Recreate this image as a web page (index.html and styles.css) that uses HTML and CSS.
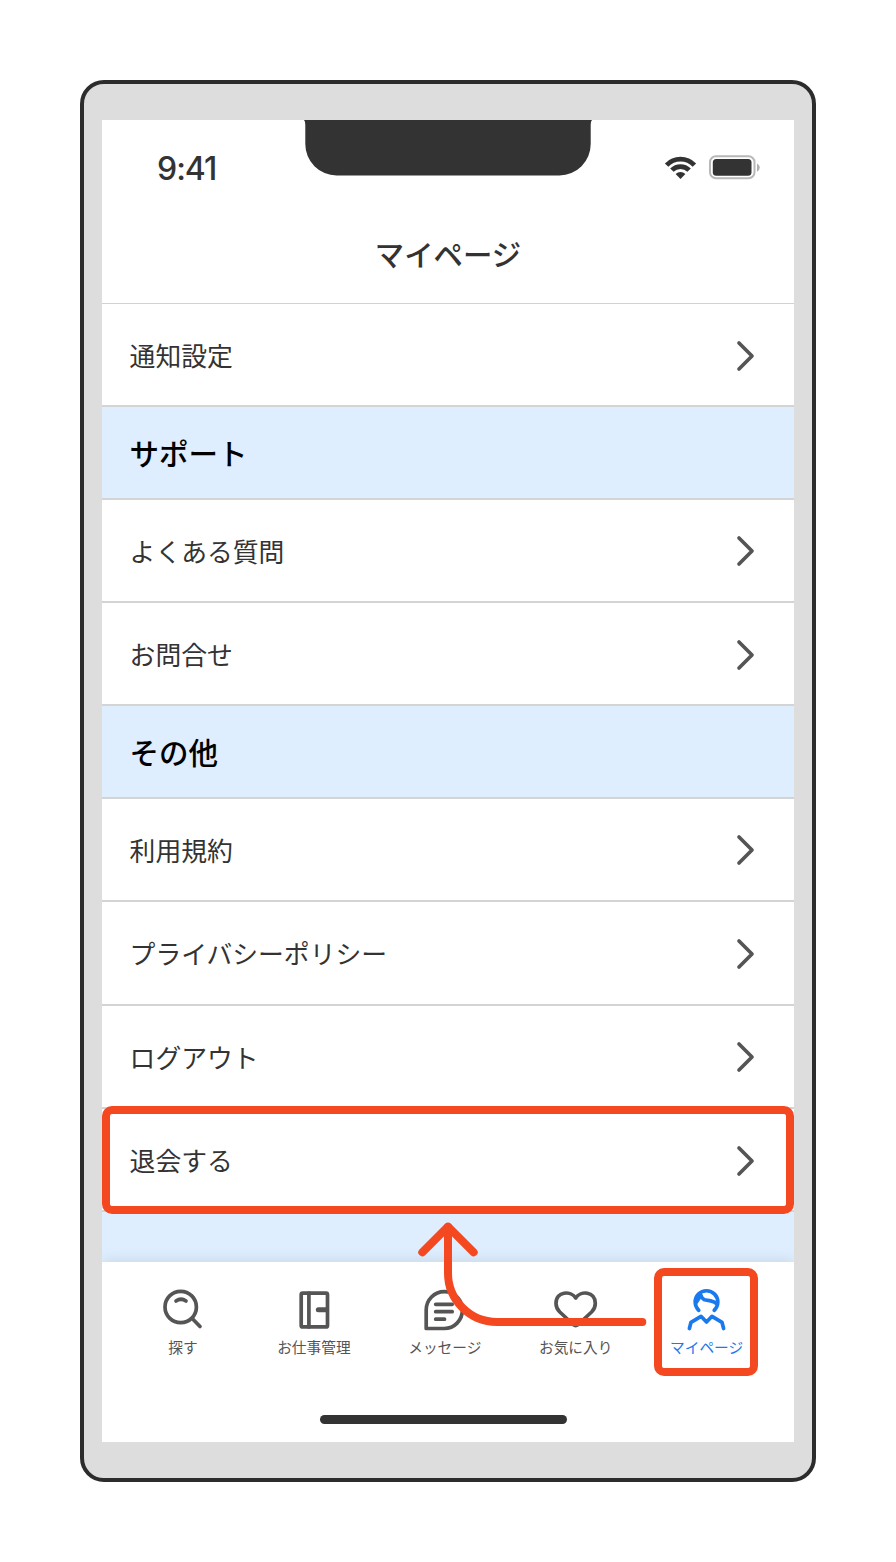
FILE: index.html
```html
<!DOCTYPE html>
<html lang="ja">
<head>
  <meta charset="UTF-8">
  <meta name="viewport" content="width=device-width, initial-scale=1.0">
  <title>マイページ</title>
  <link rel="stylesheet" href="styles.css">
</head>
<body>
  <svg class="defs">
    <symbol id="chevron" viewBox="0 0 20 32">
      <path d="M4 3 L17 16 L4 29" />
    </symbol>
  </svg>

  <div class="phone">
    <div class="screen">
      <div class="status-bar">
        <span class="time">9:41</span>
        <svg class="notch" width="290" height="56" viewBox="0 0 290 56">
          <path d="M1 0 H289 Q287.700 1 287.700 5 V24 A31.300 31.300 0 0 1 256.400 55.400 H33.600 A31.300 31.300 0 0 1 2.300 24 V5 Q2.300 1 1 0 Z" />
        </svg>
        <svg class="status-icons" width="98" height="28" viewBox="0 0 98 28">
          <!-- Wi-Fi -->
          <path class="wave" d="M4.600 12.100 A19.300 19.300 0 0 1 32.400 12.100" />
          <path class="wave" d="M9.900 17.200 A12 12 0 0 1 27.100 17.200" />
          <path class="wave-dot" d="M18.500 26 L13.600 21 A7 7 0 0 1 23.400 21 Z" />
          <!-- Battery -->
          <rect class="battery" x="48" y="3.300" width="44.500" height="22" rx="6" />
          <rect class="battery-level" x="50.800" y="5.900" width="38.700" height="16.800" rx="3.500" />
          <path class="battery-cap" d="M95 10.500 Q97.800 12 97.800 14.500 T95 18.800 Z" />
        </svg>
      </div>

      <h1 class="title">マイページ</h1>

      <ul class="menu">
        <li class="row">通知設定<svg class="chevron"><use href="#chevron" /></svg></li>
        <li class="section">サポート</li>
        <li class="row">よくある質問<svg class="chevron"><use href="#chevron" /></svg></li>
        <li class="row">お問合せ<svg class="chevron"><use href="#chevron" /></svg></li>
        <li class="section">その他</li>
        <li class="row">利用規約<svg class="chevron"><use href="#chevron" /></svg></li>
        <li class="row">プライバシーポリシー<svg class="chevron"><use href="#chevron" /></svg></li>
        <li class="row">ログアウト<svg class="chevron"><use href="#chevron" /></svg></li>
        <li class="row">退会する<svg class="chevron"><use href="#chevron" /></svg></li>
      </ul>

      <nav class="tabs">
        <div class="tab">
          <svg class="icon" viewBox="0 0 44 44">
            <circle cx="19.700" cy="19" r="15.700" />
            <path d="M31.200 30.500 L39 38.500" />
            <path d="M15 13 Q20 9.500 25 13" />
          </svg>
          <span>探す</span>
        </div>
        <div class="tab">
          <svg class="icon" viewBox="0 0 44 44">
            <rect x="9.200" y="5.200" width="26.300" height="33.700" rx="1.500" />
            <path d="M16.900 5 V39" />
            <path class="handle" d="M26.300 21.800 H34" />
          </svg>
          <span>お仕事管理</span>
        </div>
        <div class="tab">
          <svg class="icon" viewBox="0 0 44 44">
            <path d="M3.200 40.500 V22 A18.100 18.400 0 0 1 39.400 22 A18.100 18.500 0 0 1 21.300 40.500 Z" />
            <path d="M12.700 16.300 H29.200 M12.700 23.700 H29.200 M12.700 31.200 H21.500" />
          </svg>
          <span>メッセージ</span>
        </div>
        <div class="tab">
          <svg class="icon" viewBox="0 0 44 44">
            <path d="M21.700 10 C16.800 2.500 2 3 2 15.500 C2 19 3.300 21.500 5.800 24 L19.300 36.500 Q21.700 38.500 24.100 36.500 L37.600 24 C40.100 21.500 41.300 19 41.300 15.500 C41.300 3 26.600 2.500 21.700 10 Z" />
          </svg>
          <span>お気に入り</span>
        </div>
        <div class="tab active">
          <svg class="icon" viewBox="0 0 44 44">
            <path d="M13.800 22.300 A11.300 11.300 0 1 1 29.200 22.300" />
            <path class="hair" d="M15.500 6.500 Q17 10.700 19.500 11.700 L25.700 12.900 Q30 13.700 32 16.200" />
            <path class="hair" d="M15.500 8 L11.500 14" />
            <path d="M4.400 40.500 L6 34.300 L16 28.300 L21.500 34 L27 28.300 L37 34.300 L38.600 40.500" />
          </svg>
          <span>マイページ</span>
        </div>
      </nav>
      <div class="home-bar"></div>

      <!-- Guide: tap the tab, then the menu row -->
      <div class="callout callout-row"></div>
      <div class="callout callout-tab"></div>
      <svg class="arrow" width="240" height="120" viewBox="0 0 240 120">
        <path d="M8.300 36.300 L34 10.700 L59.700 36.300" />
        <path d="M34 11 V57 A49 49 0 0 0 83 106 H228.300" />
      </svg>
    </div>
  </div>
</body>
</html>
```

FILE: styles.css
```css
* {
  box-sizing: border-box;
}

body {
  margin: 0;
  padding: 80px;
  background: #ffffff;
  color: #333333;
  font-family: "Noto Sans CJK JP", sans-serif;
}

svg {
  fill: none;
  stroke-linecap: round;
  stroke-linejoin: round;
}

.defs {
  position: absolute;
  width: 0;
  height: 0;
}

/* Device */
.phone {
  width: 736px;
  height: 1402px;
  padding: 36px 18px;
  background: #dddddd;
  border: 4px solid #2c2c2c;
  border-radius: 24px;
}

.screen {
  position: relative;
  display: flex;
  flex-direction: column;
  height: 1322px;
  background: #ffffff;
}

/* Status bar */
.status-bar {
  display: grid;
  grid-template-columns: 1fr 290px 1fr;
  height: 88px;
}

.time {
  padding: 29px 0 0 55px;
  font-family: Inter, sans-serif;
  font-size: 32px;
  font-weight: 500;
  line-height: 39px;
  letter-spacing: -1px;
}

.notch {
  fill: #333333;
}

.status-icons {
  justify-self: end;
  margin: 33px 34px 0 0;
}

.wave {
  stroke: #333333;
  stroke-width: 4.8;
  stroke-linecap: butt;
}

.wave-dot,
.battery-level {
  fill: #333333;
}

.battery {
  stroke: #b8b8b8;
  stroke-width: 2;
}

.battery-cap {
  fill: #b0b0b0;
}

.title {
  height: 96px;
  margin: 0;
  border-bottom: 1px solid #d2d2d2;
  font-size: 29.4px;
  font-weight: 500;
  line-height: 90px;
  text-align: center;
}

/* Menu */
.menu {
  flex: 1;
  margin: 0;
  padding: 0;
  background: #deeeff;
  list-style: none;
}

.row,
.section {
  display: flex;
  align-items: center;
  padding: 0 39px 0 27.6px;
  border-bottom: 2px solid #d4d4d4;
}

.row {
  justify-content: space-between;
  height: 103.4px;
  background: #ffffff;
  font-size: 25.8px;
}

.section {
  height: 92.3px;
  padding-bottom: 2px;
  color: #000000;
  font-size: 29.5px;
  font-weight: 500;
}

.chevron {
  width: 20px;
  height: 32px;
  margin-top: 2px;
  stroke: #555555;
  stroke-width: 3.7;
}

/* Tab bar */
.tabs {
  display: flex;
  height: 153px;
  padding: 26px 22px 0 15.5px;
  background: #ffffff;
  box-shadow: 0 -1px 14px rgba(0, 0, 0, 0.1);
  clip-path: inset(-20px 0 0 0);
}

.tab {
  display: flex;
  flex: 1;
  flex-direction: column;
  align-items: center;
  color: #555555;
  font-size: 14.7px;
  line-height: 22px;
  white-space: nowrap;
}

.tab.active {
  color: #1a7aed;
}

.icon {
  width: 44px;
  height: 44px;
  margin-bottom: 4px;
  stroke: currentColor;
  stroke-width: 3.7;
}

.handle {
  stroke-width: 5;
}

.hair {
  stroke-width: 3.7;
}

.home-bar {
  align-self: center;
  width: 247px;
  height: 9px;
  margin: 0 9px 18px 0;
  background: #333333;
  border-radius: 5px;
}

/* Guide overlay */
.callout {
  position: absolute;
  border: 8px solid #f44820;
  border-radius: 10px;
}

.callout-row {
  top: 986px;
  left: 0;
  width: 692px;
  height: 108px;
}

.callout-tab {
  top: 1148px;
  left: 552px;
  width: 104px;
  height: 108px;
}

.arrow {
  position: absolute;
  top: 1096px;
  left: 312px;
  stroke: #f44820;
  stroke-width: 8;
}
```
